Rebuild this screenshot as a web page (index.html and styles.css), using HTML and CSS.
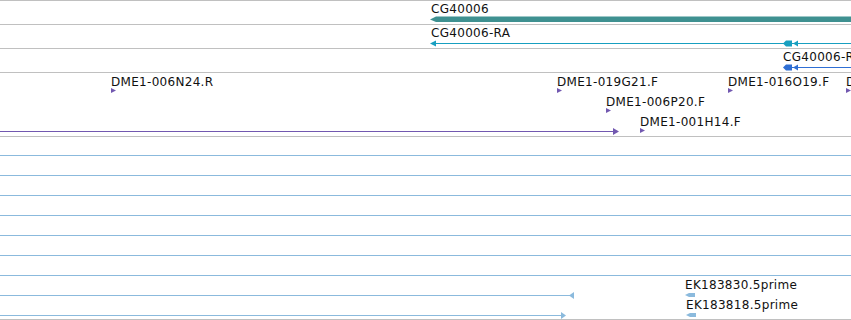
FILE: index.html
```html
<!DOCTYPE html>
<html lang="en">
<head>
  <meta charset="UTF-8" />
  <title>Track View</title>
  <link rel="stylesheet" href="styles.css">
</head>
<body>
  <div class="tracks">
    <!-- gene -->
    <div class="track track-gene">
      <svg class="canvas" width="851" height="23">
        <polygon class="gene" points="430,18.5 436,15.5 851,15.5 851,21 436,21" />
      </svg>
      <span class="label" style="left:431px;top:1px">CG40006</span>
    </div>

    <!-- transcript RA -->
    <div class="track track-tx">
      <svg class="canvas" width="851" height="23">
        <g class="tx-a">
          <rect x="435" y="18" width="416" height="1" />
          <polygon points="430,18.5 436,15.5 436,21.5" />
          <polygon points="783,18.5 786,15.5 792,15.5 792,21.5 786,21.5" />
          <polygon points="793,18.5 798,15.5 798,21.5" />
        </g>
      </svg>
      <span class="label" style="left:431px;top:1px">CG40006-RA</span>
    </div>

    <!-- transcript RB -->
    <div class="track track-tx">
      <svg class="canvas" width="851" height="23">
        <g class="tx-b">
          <rect x="792" y="18" width="59" height="1" />
          <polygon points="783,18.5 786,15.5 792,15.5 792,21.5 786,21.5" />
          <polygon points="793,18.5 798,15.5 798,21.5" />
        </g>
      </svg>
      <span class="label" style="left:783px;top:1px">CG40006-RB</span>
    </div>

    <!-- BAC ends -->
    <div class="track track-bac">
      <svg class="canvas" width="851" height="63">
        <g class="bac">
          <polygon points="111,15 116,17.5 111,20" />
          <polygon points="557,15 562,17.5 557,20" />
          <polygon points="728,15 733,17.5 728,20" />
          <polygon points="846,15 851,17.5 846,20" />
          <polygon points="606,35 611,37.5 606,40" />
          <rect x="0" y="58" width="614" height="1" />
          <polygon points="613,55 619,58.5 613,62" />
          <polygon points="640,55 645,57.5 640,60" />
        </g>
      </svg>
      <span class="label" style="left:111px;top:1.5px">DME1-006N24.R</span>
      <span class="label" style="left:557px;top:1.5px">DME1-019G21.F</span>
      <span class="label" style="left:728px;top:1.5px">DME1-016O19.F</span>
      <span class="label" style="left:846px;top:1.5px">DME1-011K02.F</span>
      <span class="label" style="left:606px;top:21.5px">DME1-006P20.F</span>
      <span class="label" style="left:640px;top:41.5px">DME1-001H14.F</span>
    </div>

    <!-- ESTs -->
    <div class="track track-est">
      <svg class="canvas" width="851" height="182">
        <g class="est">
          <rect x="0" y="18" width="851" height="1" />
          <rect x="0" y="38" width="851" height="1" />
          <rect x="0" y="58" width="851" height="1" />
          <rect x="0" y="78" width="851" height="1" />
          <rect x="0" y="98" width="851" height="1" />
          <rect x="0" y="118" width="851" height="1" />
          <rect x="0" y="138" width="851" height="1" />
          <rect x="0" y="158" width="570" height="1" />
          <polygon points="569,158.5 574,155 574,162" />
          <rect x="0" y="178" width="563" height="1" />
          <polygon points="561,175 566,178.5 561,182" />
          <polygon points="685,158 689,156 695,156 695,160 689,160" />
          <polygon points="686,178 690,176 696,176 696,180 690,180" />
        </g>
      </svg>
      <span class="label" style="left:685px;top:140.5px">EK183830.5prime</span>
      <span class="label" style="left:686px;top:160.5px">EK183818.5prime</span>
    </div>
  </div>
</body>
</html>
```

FILE: styles.css
```css
:root {
  --rule: #c0c0c0;
  --gene: #3f9191;
  --tx-a: #179fc0;
  --tx-b: #2f6fd4;
  --bac: #7258b0;
  --est: #8bbadd;
  --text: #111;
}

body, html {
  margin: 0;
  padding: 0;
  background: #fff;
  overflow: hidden;
}

.tracks {
  width: 851px;
  border-top: 1px solid var(--rule);
  font-family: 'DejaVu Sans', Verdana, sans-serif;
  font-size: 12px;
  color: var(--text);
}

.track {
  position: relative;
  overflow: hidden;
  border-bottom: 1px solid var(--rule);
}

.canvas {
  display: block;
}

/* labels sit over the glyphs, clipped at the track edge */
.label {
  position: absolute;
  white-space: nowrap;
  line-height: 14px;
  letter-spacing: 0.3px;
}

.gene { fill: var(--gene); }
.tx-a { fill: var(--tx-a); }
.tx-b { fill: var(--tx-b); }
.bac  { fill: var(--bac); }
.est  { fill: var(--est); }
```
